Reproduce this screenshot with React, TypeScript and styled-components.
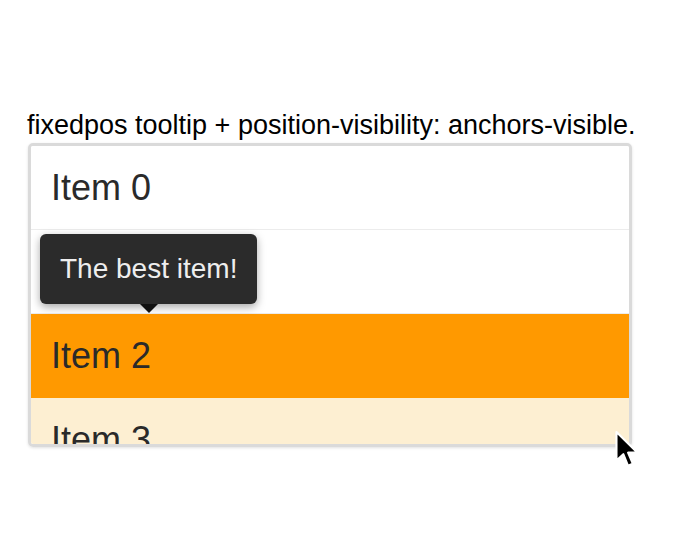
import styled, { createGlobalStyle } from "styled-components";

const GlobalStyle = createGlobalStyle`
  html, body {
    margin: 0;
    background: #fff;
    font-family: "Liberation Sans", Arial, sans-serif;
  }
`;

const Page = styled.div`
  position: relative;
  width: 676px;
  height: 558px;
  padding: 110px 0 0 27px;
  box-sizing: border-box;
`;

const Heading = styled.p`
  margin: 0;
  font-size: 27px;
  line-height: 31px;
  color: #000;
  white-space: nowrap;
`;

const ScrollBox = styled.div`
  position: relative;
  margin-top: 2px;
  margin-left: 1px;
  width: 604px;
  height: 304px;
  box-sizing: border-box;
  border: 3px solid #dadada;
  border-radius: 5px;
  box-shadow: 0 1px 3px rgba(0, 0, 0, 0.12);
  overflow: hidden;
`;

const List = styled.ul`
  list-style: none;
  margin: 0;
  padding: 0;
`;

const Row = styled.li<{ $tone?: "hot" | "warm" }>`
  height: 84px;
  box-sizing: border-box;
  display: flex;
  align-items: center;
  padding-left: 20px;
  font-size: 36px;
  color: #2a2a2a;
  border-bottom: 1px solid ${(p) => (p.$tone ? "transparent" : "#ececec")};
  background: ${(p) =>
    p.$tone === "hot" ? "#ff9900" : p.$tone === "warm" ? "#fdefd2" : "#fff"};
`;

const Tooltip = styled.div`
  position: absolute;
  left: 9px;
  top: 88px;
  padding: 0 20px;
  height: 70px;
  display: flex;
  align-items: center;
  background: #2b2b2b;
  color: #eee;
  font-size: 28px;
  border-radius: 6px;
  box-shadow: 0 3px 8px rgba(0, 0, 0, 0.35);
  white-space: nowrap;

  &::after {
    content: "";
    position: absolute;
    left: 50%;
    top: 100%;
    margin-left: -9px;
    border-style: solid;
    border-width: 9px 9px 0 9px;
    border-color: #111 transparent transparent transparent;
  }
`;

const Cursor = styled.svg`
  position: absolute;
  left: 612px;
  top: 430px;
  width: 30px;
  height: 40px;
`;

export default function App() {
  return (
    <>
      <GlobalStyle />
      <Page>
        <Heading>fixedpos tooltip + position-visibility: anchors-visible.</Heading>
        <ScrollBox>
          <List>
            <Row>Item 0</Row>
            <Row>Item 1</Row>
            <Row $tone="hot">Item 2</Row>
            <Row $tone="warm">Item 3</Row>
            <Row>Item 4</Row>
          </List>
          <Tooltip>The best item!</Tooltip>
        </ScrollBox>
        <Cursor viewBox="0 0 28 38">
          <path
            d="M4 2 L4 29 L10.5 23 L15 34 L19.5 32 L15 21.5 L24 21.5 Z"
            fill="#000"
            stroke="#fff"
            strokeWidth="2"
            strokeLinejoin="round"
          />
        </Cursor>
      </Page>
    </>
  );
}
